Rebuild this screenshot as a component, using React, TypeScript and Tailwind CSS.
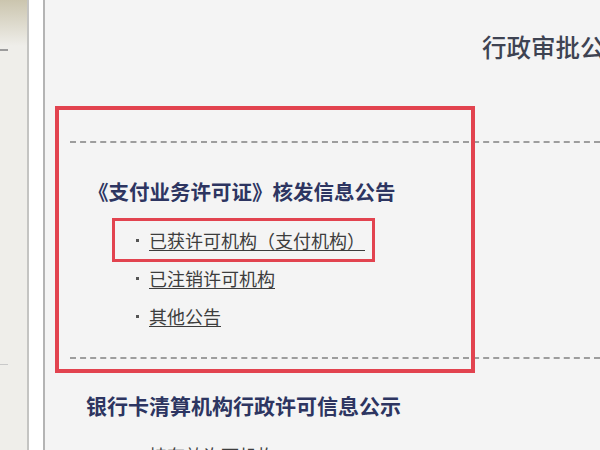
const font = { fontFamily: '"Noto Sans CJK SC", "Noto Sans", sans-serif' }

const items = ['已获许可机构（支付机构）', '已注销许可机构', '其他公告']

export default function App() {
  return (
    <div className="flex h-[450px] w-[600px] overflow-hidden bg-[#f4f4f4]" style={font}>
      <aside className="flex w-[29px] flex-col border-r-2 border-[#c4c4c2] bg-[#efeeea]">
        <div className="h-[46px] bg-gradient-to-b from-[#cbc5ae] to-[#efeeea]" />
        <div className="mt-[3px] h-[2px] w-[8px] bg-[#9c9c9c]" />
        <div className="mt-[313px] h-[1px] w-[8px] bg-[#c9c9c9]" />
      </aside>
      <div className="w-[16px] border-r-2 border-[#b4b4b4] bg-white" />

      <main className="relative flex-1 overflow-hidden">
        <div className="h-[141px] overflow-hidden whitespace-nowrap pl-[437px] pt-[30px] text-[24.5px] leading-[34px] font-medium text-[#3e4352]">
          行政审批公告
        </div>
        <div className="ml-[25px] border-t-2 border-dashed border-[#9d9d9d]" />

        <h2 className="ml-[43px] mt-[33px] h-[30px] whitespace-nowrap text-[20.5px] leading-[30px] font-bold text-[#2d3561]">
          《支付业务许可证》核发信息公告
        </h2>
        <ul className="mt-[15px]">
          {items.map((item) => (
            <li key={item} className="flex h-[38px] items-center pl-[91px]">
              <span className="mr-[10px] h-[3px] w-[3px] bg-[#555]" />
              <a className="whitespace-nowrap text-[18px] leading-none text-[#3d3d3d] underline underline-offset-2">
                {item}
              </a>
            </li>
          ))}
        </ul>
        <div className="ml-[25px] mt-[22px] border-t-2 border-dashed border-[#9d9d9d]" />

        <h2 className="ml-[41px] mt-[31px] h-[30px] whitespace-nowrap text-[21px] leading-[30px] font-bold text-[#2d3561]">
          银行卡清算机构行政许可信息公示
        </h2>
        <div className="mt-[16px] flex h-[38px] items-center pl-[91px]">
          <span className="mr-[10px] h-[3px] w-[3px] bg-[#555]" />
          <a className="whitespace-nowrap text-[18px] leading-none text-[#3d3d3d] underline">持有效许可机构</a>
        </div>

        <div className="pointer-events-none absolute left-[10px] top-[106px] h-[267px] w-[420px] border-4 border-[#e2434f]" />
        <div className="pointer-events-none absolute left-[67px] top-[218px] h-[44px] w-[263px] border-[3px] border-[#e2434f]" />
      </main>
    </div>
  )
}
